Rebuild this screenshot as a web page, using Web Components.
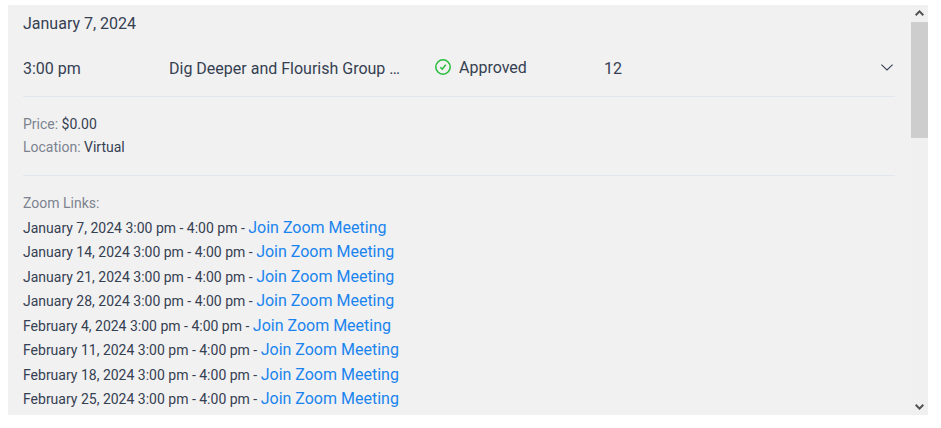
<!DOCTYPE html>
<html lang="en">
<head>
<meta charset="utf-8">
<title>Appointments</title>
<style>
body{margin:5px 13px 13px 8px;background:#fff;font-family:Roboto,"Liberation Sans",sans-serif;font-size:16px;color:#354052}
</style>
</head>
<body>
<scroll-panel>
  <appointment-day date="January 7, 2024">
    <appointment-row time="3:00 pm" name="Dig Deeper and Flourish Group …" status="Approved" count="12"></appointment-row>
    <detail-section>
      <detail-item label="Price:">$0.00</detail-item>
      <detail-item label="Location:">Virtual</detail-item>
    </detail-section>
    <zoom-links></zoom-links>
  </appointment-day>
</scroll-panel>
<script>
const attach = (el, html) => { el.attachShadow({mode:'open'}).innerHTML = html; };

customElements.define('scroll-panel', class extends HTMLElement {
  constructor(){ super(); attach(this, `<style>
    :host{display:flex;background:#f1f1f1}
    main{flex:1;min-width:0;padding:7px 16px 3px 15px}
    aside{flex:none;width:17px;background:#f0f0f0;display:flex;flex-direction:column}
    button{flex:none;height:17px;padding:0;border:0;background:none;display:grid;place-items:center}
    .track{flex:1}
    .thumb{height:116px;background:#cdcdcd}
    svg{display:block}
  </style>
  <main><slot></slot></main>
  <aside>
    <button aria-label="Scroll up"><svg width="9" height="7" viewBox="0 0 9 7"><path d="M.7 5.2 4.5 1.4l3.8 3.8" fill="none" stroke="#505050" stroke-width="2"/></svg></button>
    <div class="track"><div class="thumb"></div></div>
    <button aria-label="Scroll down"><svg width="9" height="7" viewBox="0 0 9 7"><path d="M.7 1.8 4.5 5.6l3.8-3.8" fill="none" stroke="#505050" stroke-width="2"/></svg></button>
  </aside>`); }
});

customElements.define('appointment-day', class extends HTMLElement {
  constructor(){ super(); attach(this, `<style>
    :host{display:block}
    h2{margin:0;font-size:16px;font-weight:400;line-height:24px}
  </style><h2></h2><slot></slot>`); }
  connectedCallback(){ this.shadowRoot.querySelector('h2').textContent = this.getAttribute('date'); }
});

customElements.define('appointment-row', class extends HTMLElement {
  constructor(){ super(); attach(this, `<style>
    :host{display:grid;grid-template-columns:146fr 266fr 169fr 271fr 20px;align-items:center;height:61px;box-sizing:border-box;padding-top:6px;border-bottom:1px solid #e2e6f0;line-height:24px}
    .name{white-space:nowrap;overflow:hidden;text-overflow:ellipsis}
    .status{display:flex;align-items:center;gap:8px;padding-bottom:2px}
    .status svg{margin-bottom:2px}
    button{padding:0 2px 3px;border:0;background:none;color:inherit;display:flex;justify-content:flex-end}
    svg{display:block;flex:none}
  </style>
  <span class="time"></span><span class="name"></span>
  <span class="status"><svg width="16" height="16" viewBox="0 0 16 16" fill="none" stroke="#26bd3c"><circle cx="8" cy="8" r="7.2" stroke-width="1.5"/><path d="m5.3 8.2 2 2 3.4-4.5" stroke-width="1.5"/></svg><span></span></span>
  <span class="count"></span>
  <button aria-label="Collapse details"><svg width="12" height="7" viewBox="0 0 12 7"><path d="m.4.6 5.6 5.3L11.6.6" fill="none" stroke="currentColor" stroke-width="1.1"/></svg></button>`); }
  connectedCallback(){
    const set = (s, a) => this.shadowRoot.querySelector(s).textContent = this.getAttribute(a);
    set('.time','time'); set('.name','name'); set('.status span','status'); set('.count','count');
  }
});

customElements.define('detail-section', class extends HTMLElement {
  constructor(){ super(); attach(this, `<style>
    :host{display:block;padding:16px 0;border-bottom:1px solid #e2e6f0}
  </style><slot></slot>`); }
});

customElements.define('detail-item', class extends HTMLElement {
  constructor(){ super(); attach(this, `<style>
    :host{display:block;font-size:14px;line-height:23px}
    span{color:#7c838f}
  </style><span></span> <slot></slot>`); }
  connectedCallback(){ this.shadowRoot.querySelector('span').textContent = this.getAttribute('label'); }
});

customElements.define('zoom-links', class extends HTMLElement {
  constructor(){ super();
    const dates = ['January 7','January 14','January 21','January 28','February 4','February 11','February 18','February 25'];
    attach(this, `<style>
    :host{display:block;padding-top:16px;font-size:14px}
    h3{margin:0;font-size:14px;font-weight:400;line-height:23px;color:#7c838f}
    ul{list-style:none;margin:1px 0 0;padding:0}
    li{line-height:24px}
    li:nth-child(even){margin-bottom:1px}
    a{font-size:16px;color:#1a84ee;text-decoration:none}
  </style><h3>Zoom Links:</h3><ul>${dates.map(d => `<li>${d}, 2024 3:00 pm - 4:00 pm - <a href="#">Join Zoom Meeting</a></li>`).join('')}</ul>`); }
});
</script>
</body>
</html>
